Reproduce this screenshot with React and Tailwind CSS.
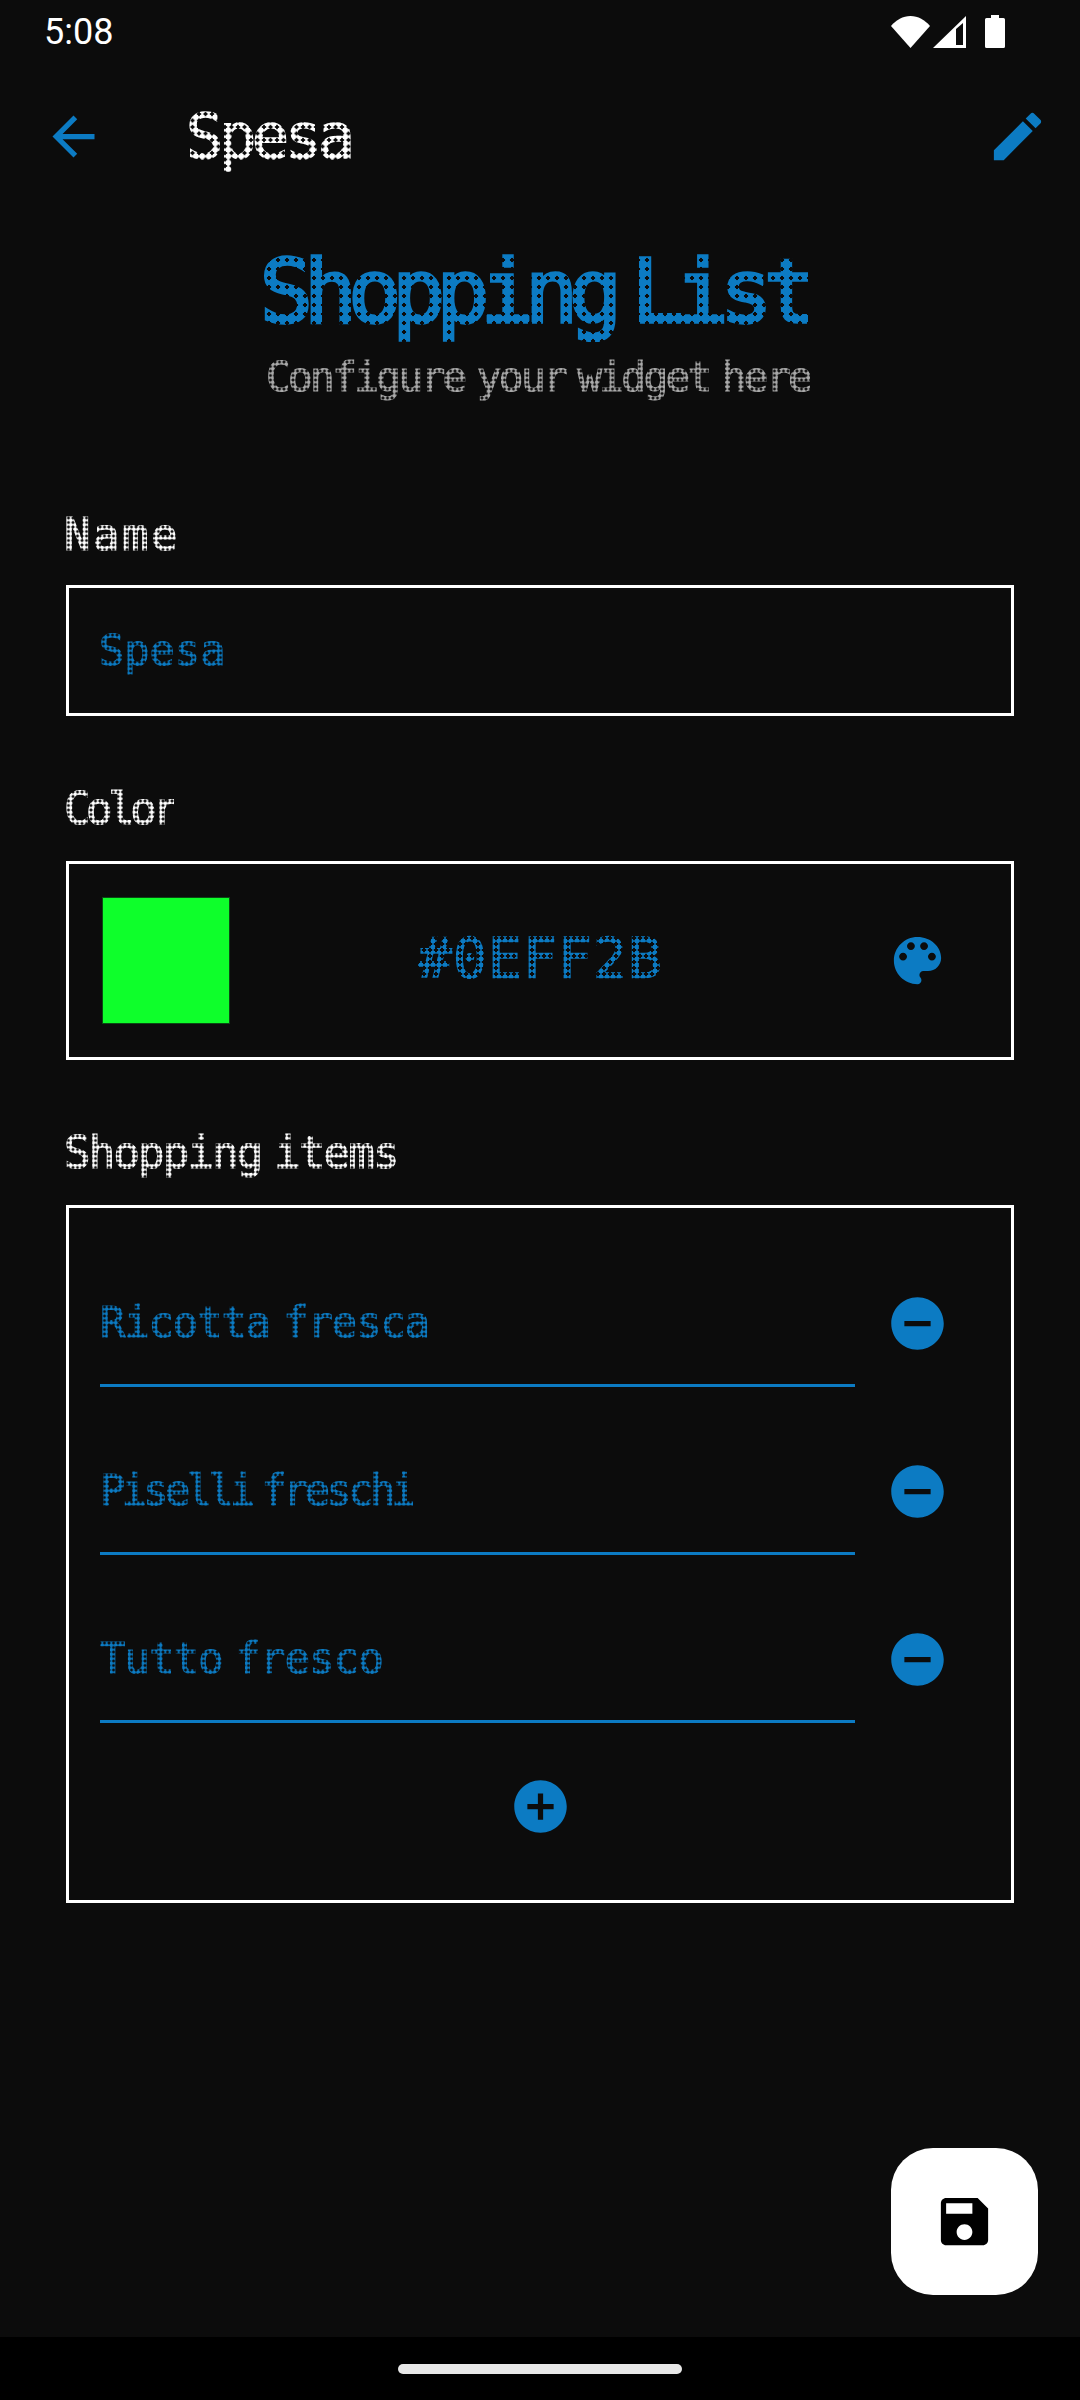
const dotFont = "font-['DejaVu_Sans_Mono',monospace]"

function MdIcon({ d, className }) {
  return (
    <svg viewBox="0 0 24 24" className={className} fill="currentColor">
      <path d={d} />
    </svg>
  )
}

const arrowBack = "M20 11H7.83l5.59-5.59L12 4l-8 8 8 8 1.41-1.41L7.83 13H20v-2z"
const edit = "M3 17.25V21h3.75L17.81 9.94l-3.75-3.75L3 17.25zM20.71 7.04c.39-.39.39-1.02 0-1.41l-2.34-2.34c-.39-.39-1.02-.39-1.41 0l-1.83 1.83 3.75 3.75 1.83-1.83z"
const palette = "M12 3c-4.97 0-9 4.03-9 9s4.03 9 9 9c.83 0 1.5-.67 1.5-1.5 0-.39-.15-.74-.39-1.01-.23-.26-.38-.61-.38-.99 0-.83.67-1.5 1.5-1.5H16c2.76 0 5-2.24 5-5 0-4.42-4.03-8-9-8zm-5.5 9c-.83 0-1.5-.67-1.5-1.5S5.67 9 6.5 9 8 9.67 8 10.5 7.33 12 6.5 12zm3-4C8.67 8 8 7.33 8 6.5S8.67 5 9.5 5s1.5.67 1.5 1.5S10.33 8 9.5 8zm5 0c-.83 0-1.5-.67-1.5-1.5S13.67 5 14.5 5s1.5.67 1.5 1.5S15.33 8 14.5 8zm3 4c-.83 0-1.5-.67-1.5-1.5S16.67 9 17.5 9s1.5.67 1.5 1.5-.67 1.5-1.5 1.5z"
const removeCircle = "M12 2C6.48 2 2 6.48 2 12s4.48 10 10 10 10-4.48 10-10S17.52 2 12 2zm5 11H7v-2h10v2z"
const addCircle = "M12 2C6.48 2 2 6.48 2 12s4.48 10 10 10 10-4.48 10-10S17.52 2 12 2zm5 11h-4v4h-2v-4H7v-2h4V7h2v4h4v2z"
const save = "M17 3H5c-1.11 0-2 .9-2 2v14c0 1.1.89 2 2 2h14c1.1 0 2-.9 2-2V7l-4-4zm-5 16c-1.66 0-3-1.34-3-3s1.34-3 3-3 3 1.34 3 3-1.34 3-3 3zm3-10H5V5h10v4z"

// small dotted text: a dot mask over real text, stroked a little so the dots fill up
const smallDots = "[-webkit-text-stroke:1.200px_currentColor] [mask-image:radial-gradient(circle,#000_58%,transparent_68%)] [mask-size:4.5px_4.5px]"

function Label({ children, className }) {
  return (
    <div className="h-[78px] pl-[64px]">
      <span className={`${dotFont} ${smallDots} inline-block text-[44px] leading-[52px] text-white ${className}`}>{children}</span>
    </div>
  )
}

function ItemRow({ children, className }) {
  return (
    <div className="flex h-[168px] items-start">
      <div className="flex h-[115px] w-[755px] flex-none items-center border-b-[3px] border-[#0c7bc3] pb-[11px]">
        <span className={`${dotFont} ${smallDots} text-[42px] leading-[50px] text-[#0c7bc3] ${className}`}>{children}</span>
      </div>
      <MdIcon d={removeCircle} className="ml-[31px] mt-[20px] h-[63px] w-[63px] flex-none text-[#0c7bc3]" />
    </div>
  )
}

export default function App() {
  return (
    <div className="relative flex h-[2400px] w-[1080px] flex-col bg-[#0c0c0c] text-white">
      {/* status bar */}
      <div className="flex h-[63px] flex-none items-center justify-between pl-[44px] pr-[75px]">
        <span className="font-['Roboto',sans-serif] text-[36px] leading-none">5:08</span>
        <div className="flex items-center">
          <svg viewBox="0 0 39 32" className="h-[32px] w-[39px]" fill="#fff">
            <path d="M0 10C5 4 12 0 19.500 0S34 4 39 10L19.500 32z" />
          </svg>
          <svg viewBox="0 0 33 32" className="ml-[3px] h-[32px] w-[33px]" fill="#fff">
            <path fillRule="evenodd" d="M0 32 33 0v32zM23 13v16h7V7z" />
          </svg>
          <svg viewBox="0 0 20 33" className="ml-[19px] h-[33px] w-[20px]" fill="#fff">
            <path d="M6 0h8v3h4.500q1.500 0 1.500 1.500v27q0 1.500-1.500 1.500h-17q-1.500 0-1.500-1.500v-27q0-1.500 1.500-1.500H6z" />
          </svg>
        </div>
      </div>

      {/* app bar */}
      <div className="flex h-[147px] flex-none items-center pl-[42px] pr-[31px]">
        <MdIcon d={arrowBack} className="h-[63px] w-[63px] flex-none text-[#0c7bc3]" />
        <span className={`${dotFont} [-webkit-text-stroke:1.500px_currentColor] [mask-image:radial-gradient(circle,#000_62%,transparent_72%)] [mask-size:6.500px_6.500px] ml-[81px] text-[62px] leading-[72px] tracking-[-4.400px] text-white`}>Spesa</span>
        <MdIcon d={edit} className="ml-auto h-[63px] w-[63px] flex-none text-[#0c7bc3]" />
      </div>

      {/* heading */}
      <div className="mt-[32px] flex flex-none flex-col items-center">
        <h1 className={`${dotFont} mr-[12px] [-webkit-text-stroke:3.500px_currentColor] [mask-image:radial-gradient(circle,#000_70%,transparent_76%)] [mask-size:9px_9px] text-[88px] font-normal leading-[100px] tracking-[-8.800px] [word-spacing:-26px] text-[#0c7bc3]`}>Shopping List</h1>
        <p className={`${dotFont} ${smallDots} mr-[4px] mt-[11px] text-[41px] leading-[48px] tracking-[-2.600px] [word-spacing:-10px] text-[#aaaaaa]`}>Configure your widget here</p>
      </div>

      {/* form */}
      <div className="mt-[108px] flex flex-col">
        <div className="-mb-[2px]">
          <Label className="tracking-[2.500px]">Name</Label>
        </div>
        <div className="mx-[66px] flex h-[131px] items-center border-[3px] border-white pl-[30px]">
          <span className={`${dotFont} ${smallDots} text-[42px] leading-[50px] tracking-[0px] text-[#0c7bc3]`}>Spesa</span>
        </div>

        <div className="mt-[67px]">
          <Label className="tracking-[-4.400px]">Color</Label>
        </div>
        <div className="mx-[66px] flex h-[199px] items-center border-[3px] border-white pl-[33px] pr-[62px]">
          <div className="h-[127px] w-[128px] flex-none border border-[#0a4a14] bg-[#0eff2b]" />
          <span className={`${dotFont} [-webkit-text-stroke:1.500px_currentColor] [mask-image:radial-gradient(circle,#000_58%,transparent_68%)] [mask-size:6px_6px] mb-[5px] ml-[188px] text-[56px] leading-[64px] tracking-[1.300px] text-[#0c7bc3]`}>#0EFF2B</span>
          <MdIcon d={palette} className="ml-auto h-[63px] w-[63px] flex-none text-[#0c7bc3]" />
        </div>

        <div className="mt-[67px]">
          <Label className="tracking-[-1.800px] [word-spacing:-12px]">Shopping items</Label>
        </div>
        <div className="mx-[66px] flex h-[698px] flex-col border-[3px] border-white pl-[31px] pt-[64px]">
          <ItemRow className="tracking-[-1px] [word-spacing:-11px]">Ricotta fresca</ItemRow>
          <ItemRow className="tracking-[-3.600px] [word-spacing:-12px]">Piselli freschi</ItemRow>
          <ItemRow className="tracking-[-0.700px] [word-spacing:-12px]">Tutto fresco</ItemRow>
          <MdIcon d={addCircle} className="-mt-[1px] ml-[409px] h-[63px] w-[63px] flex-none text-[#0c7bc3]" />
        </div>
      </div>

      {/* save button */}
      <button className="absolute left-[891px] top-[2148px] grid h-[147px] w-[147px] place-items-center rounded-[42px] bg-white text-black">
        <MdIcon d={save} className="h-[63px] w-[63px]" />
      </button>

      {/* nav bar */}
      <div className="mt-auto flex h-[63px] flex-none items-center justify-center bg-black">
        <div className="h-[10px] w-[284px] rounded-full bg-[#e8e8e8]" />
      </div>
    </div>
  )
}
